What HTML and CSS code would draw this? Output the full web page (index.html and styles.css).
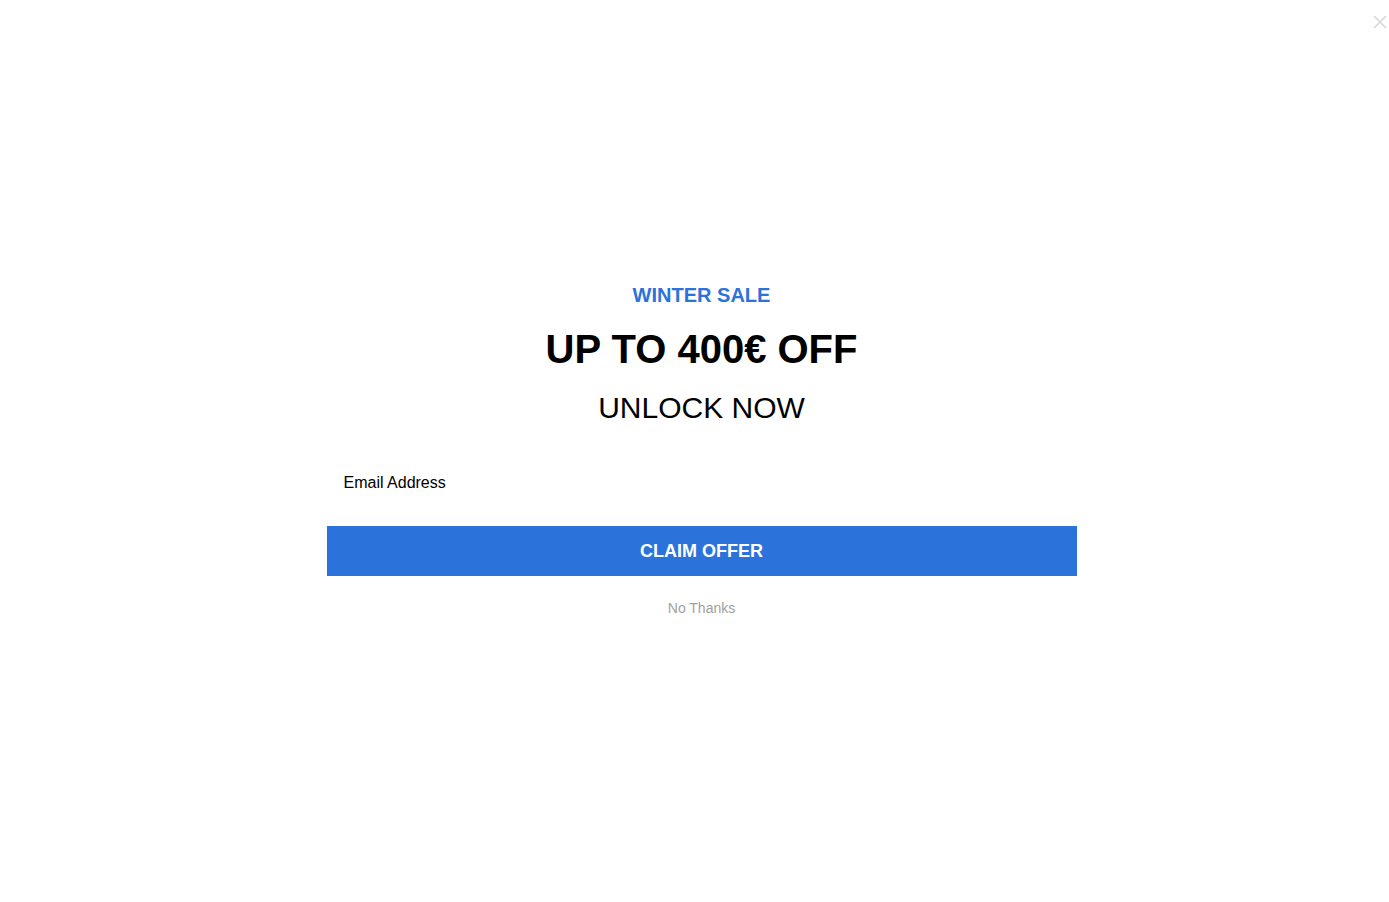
FILE: index.html
```html
<!DOCTYPE html>
<html lang="en">
<head>
  <meta charset="UTF-8">
  <meta name="viewport" content="width=device-width, initial-scale=1.0">
  <title>Winter Sale</title>
  <link rel="stylesheet" href="styles.css">
</head>
<body>
  <button class="close-btn" aria-label="Close">
    <svg width="14" height="14" viewBox="0 0 14 14">
      <path d="M1 1 L13 13 M13 1 L1 13" stroke="#d6d6d6" stroke-width="1.5" fill="none"/>
    </svg>
  </button>
  <div class="popup">
    <div class="popup-inner">
      <div class="eyebrow">WINTER SALE</div>
      <h1 class="headline">UP TO 400€ OFF</h1>
      <div class="subline">UNLOCK NOW</div>
      <form class="offer-form" onsubmit="return false">
        <input class="email" type="email" placeholder="Email Address">
        <button class="claim" type="submit">CLAIM OFFER</button>
      </form>
      <a class="no-thanks" href="#">No Thanks</a>
    </div>
  </div>
</body>
</html>
```

FILE: styles.css
```css
html, body {
  margin: 0;
  height: 100%;
}
body {
  background: #fff;
  font-family: "Liberation Sans", Arial, sans-serif;
  color: #000;
}
.close-btn {
  position: absolute;
  top: 15px;
  right: 2px;
  width: 14px;
  height: 14px;
  padding: 0;
  border: none;
  background: none;
  cursor: pointer;
}
.close-btn svg {
  display: block;
}
.popup {
  height: 100%;
  display: flex;
  align-items: center;
  justify-content: center;
  padding: 0 0 2px 14px;
  box-sizing: border-box;
}
.popup-inner {
  width: 750px;
  display: flex;
  flex-direction: column;
  align-items: center;
  text-align: center;
}
.eyebrow {
  color: #2b73db;
  font-size: 20px;
  font-weight: bold;
  line-height: 24px;
}
.headline {
  margin: 18px 0 0;
  font-size: 40px;
  font-weight: bold;
  line-height: 48px;
}
.subline {
  margin-top: 17px;
  font-size: 30px;
  line-height: 36px;
}
.offer-form {
  width: 100%;
  margin-top: 32px;
  display: flex;
  flex-direction: column;
  gap: 18px;
}
.email {
  height: 50px;
  box-sizing: border-box;
  border: none;
  outline: none;
  padding: 0 17px;
  font-family: inherit;
  font-size: 16px;
  color: #000;
  background: #fff;
}
.email::placeholder {
  color: #000;
  opacity: 1;
}
.claim {
  height: 50px;
  border: none;
  background: #2b73db;
  color: #fff;
  font-family: inherit;
  font-size: 18px;
  font-weight: bold;
  cursor: pointer;
}
.no-thanks {
  margin-top: 24px;
  font-size: 14px;
  line-height: 17px;
  color: #a0a0a0;
  text-decoration: none;
}
```
